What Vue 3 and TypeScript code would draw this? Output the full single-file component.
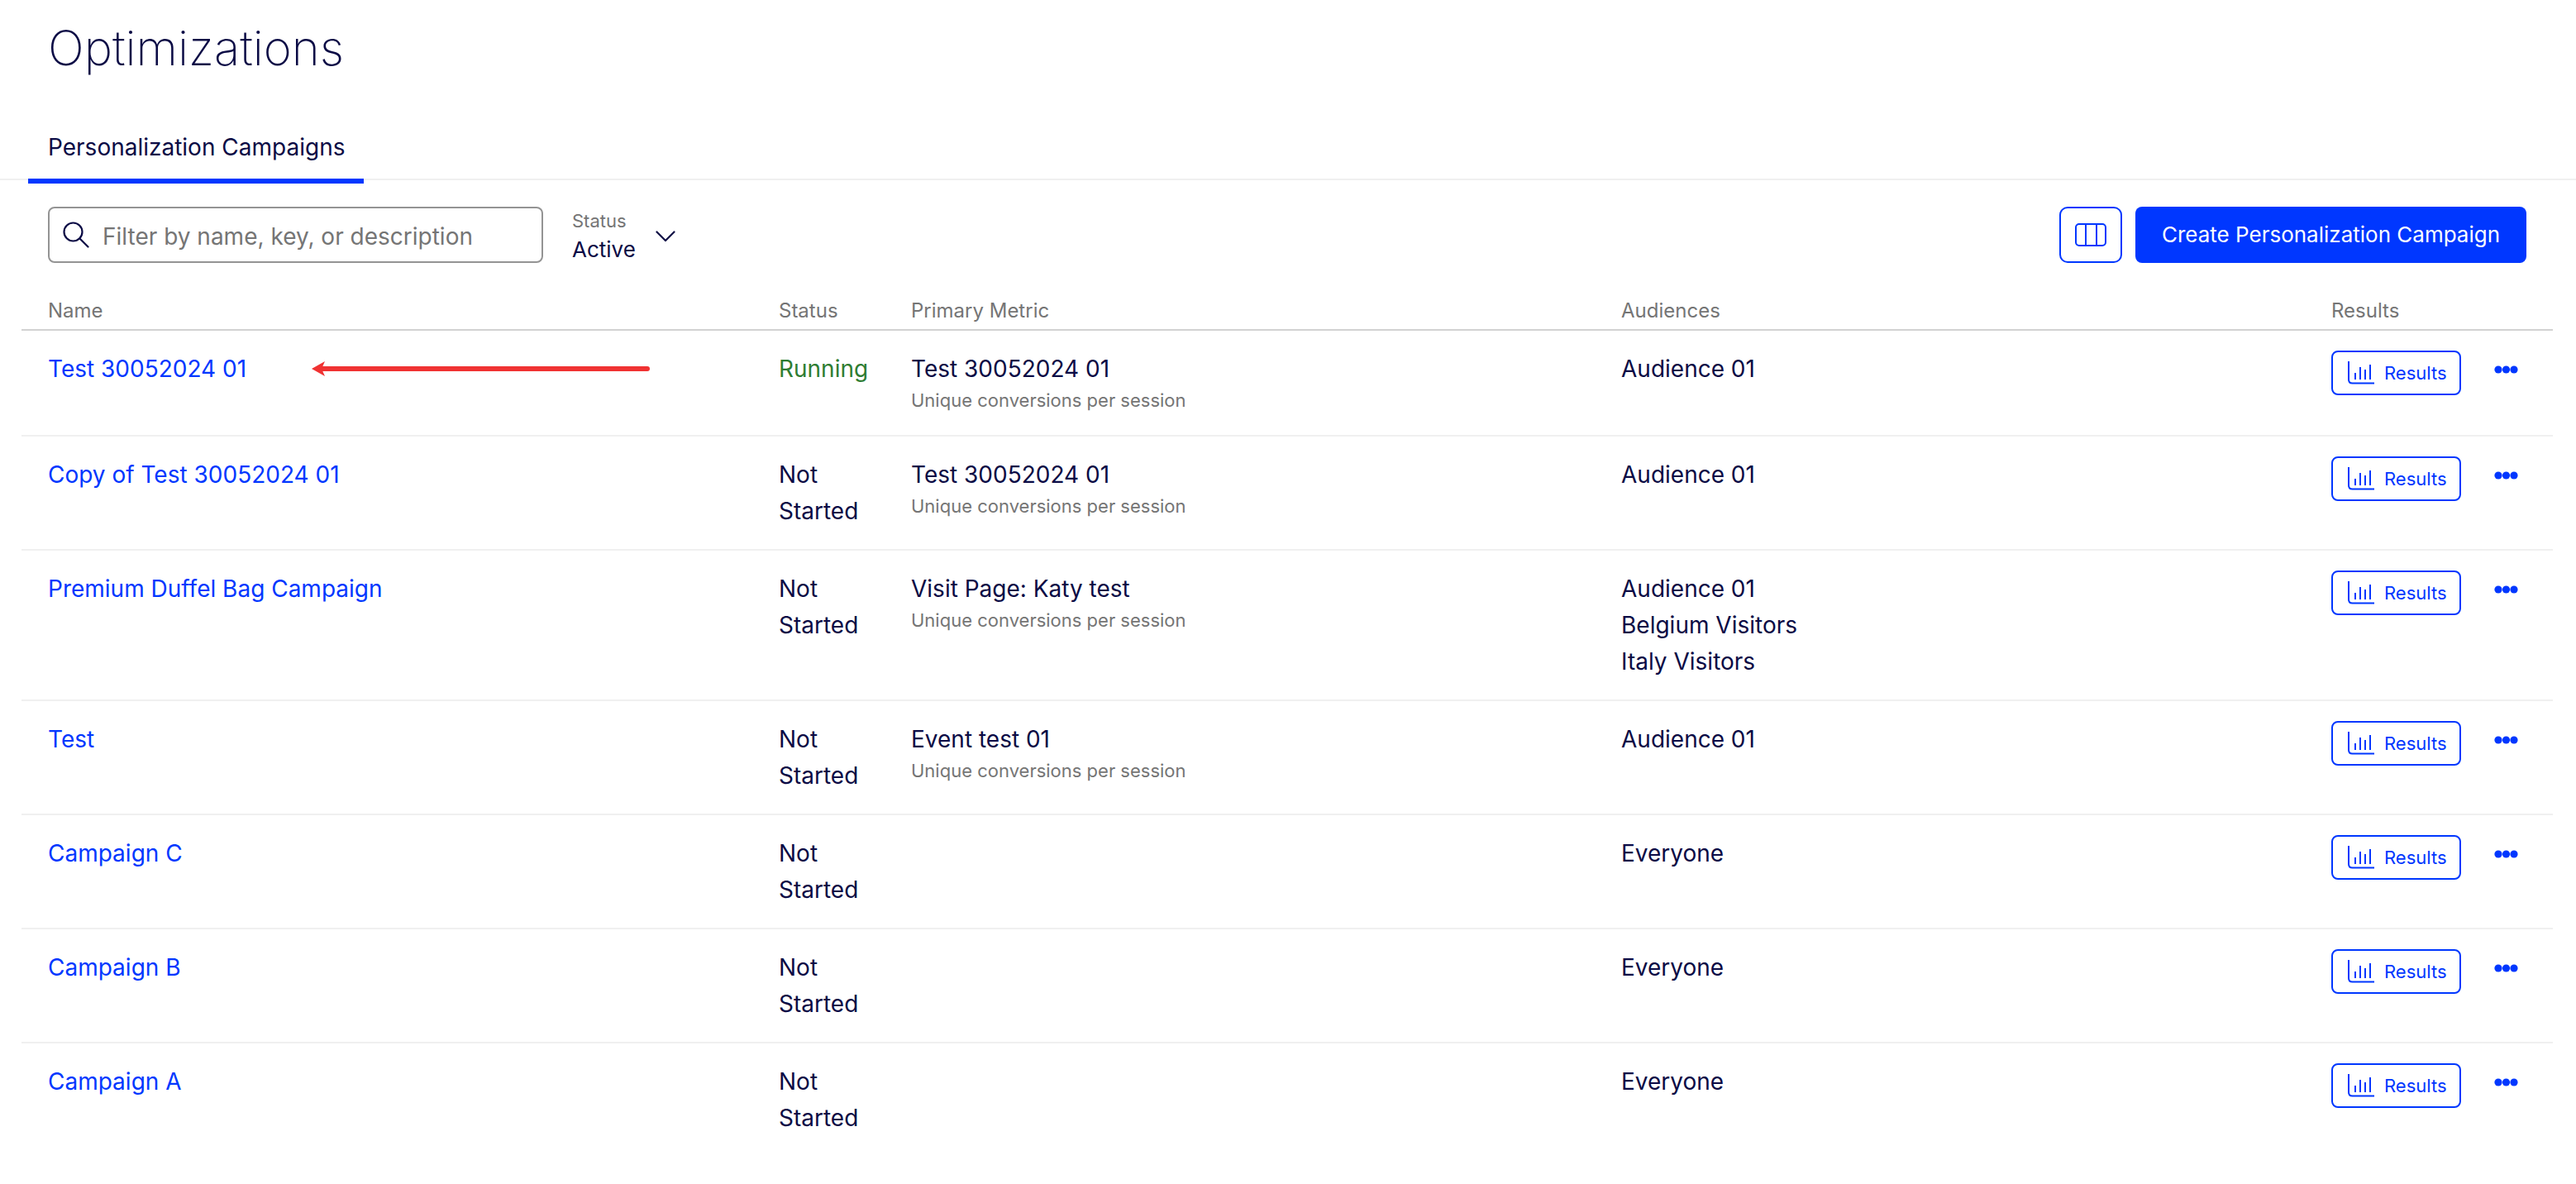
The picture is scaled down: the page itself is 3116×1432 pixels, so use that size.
<script setup lang="ts">
interface Row {
  name: string
  status: string
  metric?: string
  audiences: string[]
}
const sub = 'Unique conversions per session'
const rows: Row[] = [
  { name: 'Test 30052024 01', status: 'Running', metric: 'Test 30052024 01', audiences: ['Audience 01'] },
  { name: 'Copy of Test 30052024 01', status: 'Not Started', metric: 'Test 30052024 01', audiences: ['Audience 01'] },
  { name: 'Premium Duffel Bag Campaign', status: 'Not Started', metric: 'Visit Page: Katy test', audiences: ['Audience 01', 'Belgium Visitors', 'Italy Visitors'] },
  { name: 'Test', status: 'Not Started', metric: 'Event test 01', audiences: ['Audience 01'] },
  { name: 'Campaign C', status: 'Not Started', audiences: ['Everyone'] },
  { name: 'Campaign B', status: 'Not Started', audiences: ['Everyone'] },
  { name: 'Campaign A', status: 'Not Started', audiences: ['Everyone'] },
]
</script>

<template>
  <div class="page">
    <h1 class="title">Optimizations</h1>
    <div class="tabs">
      <div class="tab">Personalization Campaigns</div>
    </div>
    <div class="toolbar">
      <div class="search">
        <svg class="search-icon" width="32" height="32" viewBox="0 0 32 32" fill="none" stroke="#0b0b45" stroke-width="2.2">
          <circle cx="12.5" cy="12.5" r="11" />
          <path d="M20.5 20.5 L30.5 30.5" stroke-linecap="round" />
        </svg>
        <span class="placeholder">Filter by name, key, or description</span>
      </div>
      <div class="status-filter">
        <div class="filter-text">
          <div class="filter-label">Status</div>
          <div class="filter-value">Active</div>
        </div>
        <svg class="chevron" width="24" height="14" viewBox="0 0 24 14" fill="none" stroke="#0b0b45" stroke-width="2.2">
          <path d="M1.5 1.5 L12 12 L22.5 1.5" stroke-linecap="round" stroke-linejoin="round" />
        </svg>
      </div>
      <div class="spacer"></div>
      <button class="columns-btn" type="button" aria-label="Columns">
        <svg width="38" height="28" viewBox="0 0 38 28" fill="none" stroke="#0037ff" stroke-width="2">
          <rect x="1" y="1" width="36" height="26" rx="4" />
          <path d="M13 1 V27 M26 1 V27" />
        </svg>
      </button>
      <button class="create-btn" type="button">Create Personalization Campaign</button>
    </div>
    <div class="table">
      <div class="row head">
        <div>Name</div>
        <div>Status</div>
        <div>Primary Metric</div>
        <div>Audiences</div>
        <div>Results</div>
      </div>
      <div v-for="r in rows" :key="r.name" class="row body">
        <div class="link">{{ r.name }}</div>
        <div class="status" :class="{ running: r.status === 'Running' }">{{ r.status }}</div>
        <div>
          <template v-if="r.metric">
            <div>{{ r.metric }}</div>
            <div class="sub">{{ sub }}</div>
          </template>
        </div>
        <div>
          <div v-for="a in r.audiences" :key="a">{{ a }}</div>
        </div>
        <div class="actions">
          <button class="results-btn" type="button">
            <svg width="32" height="28" viewBox="0 0 32 28" fill="none" stroke="#0037ff" stroke-width="2">
              <path d="M1 0 V22 Q1 26.5 5.5 26.5 H32" />
              <path d="M9 14 V22 M15 7 V22 M21 10 V22 M27 4 V22" />
            </svg>
            <span>Results</span>
          </button>
          <svg class="dots" width="29" height="10" viewBox="0 0 29 10" fill="#0037ff">
            <circle cx="5" cy="5" r="4.6" />
            <circle cx="14.5" cy="5" r="4.6" />
            <circle cx="24" cy="5" r="4.6" />
          </svg>
        </div>
      </div>
      <svg class="arrow" width="412" height="18" viewBox="0 0 412 18">
        <path d="M12 9 H406" stroke="#f03232" stroke-width="6" stroke-linecap="round" />
        <path d="M0 9 L16 0 L12 9 L16 18 Z" fill="#f03232" />
      </svg>
    </div>
  </div>
</template>

<style scoped>
.page {
  width: 3116px;
  height: 1432px;
  overflow: hidden;
  background: #fff;
  color: #0b0b45;
  font-family: Inter, "Liberation Sans", sans-serif;
  font-size: 28px;
  line-height: 44px;
}
.title {
  margin: 0;
  padding: 22px 0 0 58px;
  height: 136px;
  box-sizing: border-box;
  font-size: 58px;
  line-height: 72px;
  font-weight: 200;
}
.tabs {
  height: 82px;
  box-sizing: border-box;
  border-bottom: 2px solid #f0f0f0;
  padding-left: 34px;
}
.tab {
  width: 406px;
  height: 86px;
  box-sizing: border-box;
  padding: 20px 0 0 24px;
  border-bottom: 6px solid #0037ff;
  font-size: 28px;
  white-space: nowrap;
}
.toolbar {
  display: flex;
  align-items: flex-start;
  height: 140px;
  padding: 32px 60px 0 58px;
  box-sizing: border-box;
}
.search {
  width: 599px;
  height: 68px;
  box-sizing: border-box;
  border: 2px solid #949494;
  border-radius: 8px;
  display: flex;
  align-items: center;
  padding-left: 16px;
  gap: 16px;
}
.placeholder {
  color: #757575;
  font-size: 28px;
  margin-top: 3px;
}
.status-filter {
  margin-left: 35px;
  padding-top: 2px;
  display: flex;
  align-items: center;
  gap: 24px;
}
.filter-label {
  color: #757575;
  font-size: 22px;
  line-height: 30px;
}
.filter-value {
  line-height: 40px;
  font-size: 26px;
}
.chevron {
  margin-top: -2px;
}
.spacer {
  flex: 1;
}
.columns-btn {
  width: 76px;
  height: 68px;
  padding: 0;
  background: #fff;
  border: 2px solid #0037ff;
  border-radius: 10px;
  display: flex;
  align-items: center;
  justify-content: center;
}
.create-btn {
  margin-left: 16px;
  width: 473px;
  height: 68px;
  background: #0037ff;
  color: #fff;
  border: 0;
  border-radius: 8px;
  font: inherit;
  font-size: 26px;
  padding: 0;
}
.table {
  position: relative;
  margin: 0 28px 0 26px;
}
.row {
  display: grid;
  grid-template-columns: 884px 160px 859px 859px 1fr;
  padding-left: 32px;
}
.head {
  height: 40px;
  color: #757575;
  font-size: 24px;
  line-height: 36px;
  border-bottom: 2px solid #d2d2d2;
  box-sizing: content-box;
}
.body {
  padding-top: 24px;
  padding-bottom: 24px;
  border-bottom: 2px solid #f0f0f0;
}
.body:last-of-type {
  border-bottom-color: transparent;
}
.link {
  color: #0037ff;
}
.status {
  padding-right: 20px;
}
.running {
  color: #2e7d32;
}
.sub {
  color: #757575;
  font-size: 22px;
  line-height: 32px;
  padding-bottom: 2px;
}
.actions {
  display: flex;
  align-items: flex-start;
  gap: 40px;
}
.results-btn {
  display: flex;
  align-items: center;
  gap: 12px;
  width: 157px;
  height: 54px;
  padding: 0 0 0 18px;
  background: #fff;
  color: #0037ff;
  border: 2px solid #0037ff;
  border-radius: 8px;
  font: inherit;
  font-size: 22px;
}
.results-btn svg {
  width: 32px;
  height: 28px;
  flex: none;
}
.dots {
  margin-top: 18px;
}
.arrow {
  position: absolute;
  left: 351px;
  top: 79px;
}
</style>
